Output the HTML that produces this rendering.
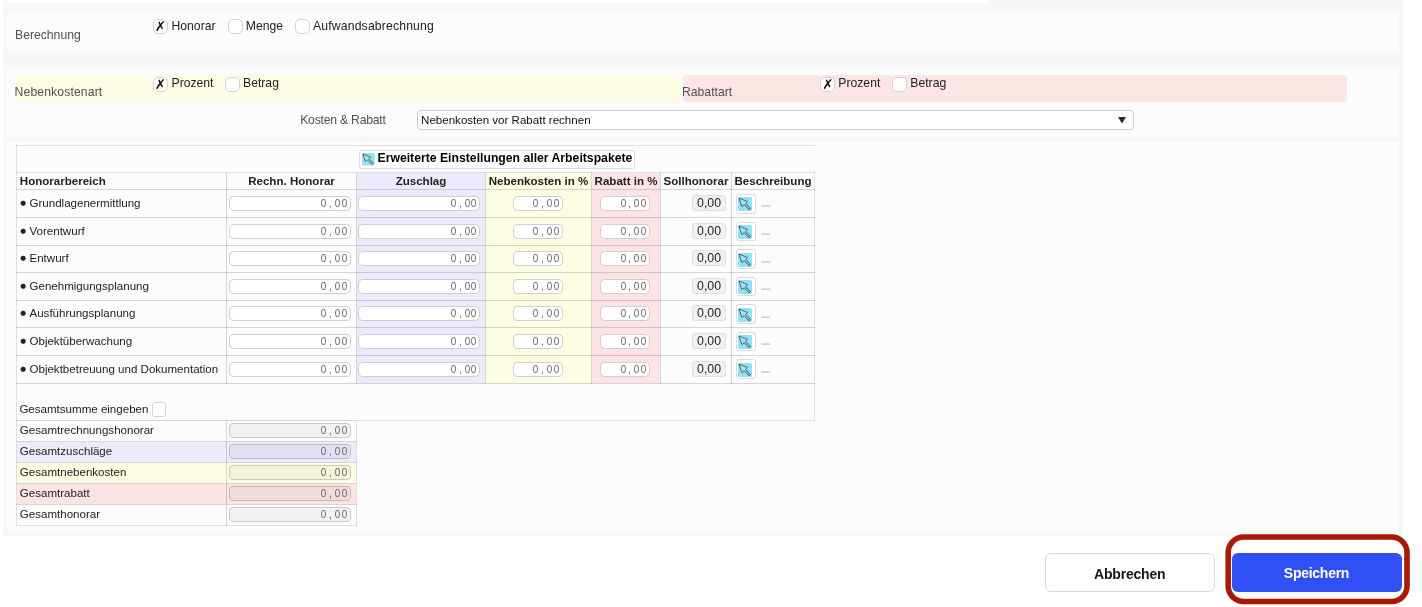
<!DOCTYPE html>
<html lang="de"><head><meta charset="utf-8"><title>Honorar</title>
<style>
html,body{margin:0;padding:0;background:#fff;}
body{width:1422px;height:607px;position:relative;overflow:hidden;font-family:"Liberation Sans",sans-serif;color:#222;}
.abs{position:absolute;}
#outer{left:3px;top:0;width:1400px;height:535.5px;background:#f7f7f7;}
#topw{left:7px;top:0;width:980.5px;height:3px;background:#fff;border-bottom-left-radius:3px;}
.lp{left:7px;width:1392px;background:#fcfcfc;}
.lbl{font-size:12.2px;color:#505050;white-space:nowrap;line-height:14px;letter-spacing:0;}
.opt{font-size:12.2px;color:#222;white-space:nowrap;line-height:14px;letter-spacing:0;}
.cb{width:13px;height:13px;border:1px solid #d4d4d4;border-radius:5px;background:#fff;box-sizing:content-box;}
.cb span{position:absolute;left:-1px;top:-1.6px;width:15px;text-align:center;font-size:13.5px;line-height:15px;font-family:"DejaVu Sans",sans-serif;color:#111;}
.t{font-size:11.56px;white-space:nowrap;line-height:14px;color:#222;}
.b{font-weight:bold;}
.hl{background:rgba(0,0,0,0.15);height:1px;}
.vl{background:rgba(0,0,0,0.15);width:1px;}
.lt{background:rgba(0,0,0,0.11);}
.inp{box-sizing:border-box;border:1px solid #cfcfcf;border-radius:4.5px;background:#fff;height:14.6px;}
.inp span{position:absolute;right:2.2px;top:-0.4px;font-family:"Liberation Sans",sans-serif;font-size:11px;line-height:13px;color:#666;white-space:nowrap;}
.inp i{display:inline-block;width:6.95px;text-align:center;font-style:normal;transform:scaleX(0.9);}
.tin{background:rgba(0,0,0,0.04);border-color:rgba(0,0,0,0.17);}
.soll{box-sizing:border-box;border:1px solid #e0e0e0;border-radius:3px;background:#f1f1f1;width:33.5px;height:15.6px;}
.soll span{position:absolute;left:0;width:100%;text-align:center;top:0.3px;font-size:12.3px;line-height:14px;color:#222;}
.btn{box-sizing:border-box;border:1px solid #dcdcdc;border-radius:3px;background:#fff;}
.ic{position:absolute;display:block;}
.bu{display:inline-block;width:9.9px;font-family:'DejaVu Sans',sans-serif;font-size:6.7px;line-height:14px;vertical-align:top;position:relative;top:-0.2px;left:0.7px;}
.dash{font-size:11.5px;color:#d2d2d2;line-height:14px;font-weight:bold;}
</style></head><body><div id="wrap" style="position:absolute;left:0;top:0;width:1422px;height:607px;will-change:transform;">
<div id="outer" class="abs"></div>
<div id="topw" class="abs"></div>
<div class="abs lp" style="top:12px;height:39.7px;"></div>
<div class="abs lp" style="top:68.7px;height:68.6px;"></div>
<div class="abs lp" style="top:141px;height:390.6px;"></div>

<div class="abs lbl" style="left:15px;top:27.6px;">Berechnung</div>
<div class="abs cb" style="left:153px;top:19.2px;"><span>✗</span></div>
<div class="abs opt" style="left:171.5px;top:18.8px;">Honorar</div>
<div class="abs cb" style="left:228px;top:19.2px;"></div>
<div class="abs opt" style="left:245.8px;top:18.8px;">Menge</div>
<div class="abs cb" style="left:295px;top:19.2px;"></div>
<div class="abs opt" style="left:313px;top:18.8px;letter-spacing:0.17px;">Aufwandsabrechnung</div>
<div class="abs" style="left:16px;top:75px;width:664px;height:26.8px;background:#fdfde5;border-radius:3px;"></div>
<div class="abs" style="left:683px;top:75px;width:664px;height:26.8px;background:#fce5e5;border-radius:3px;"></div>
<div class="abs lbl" style="left:14.6px;top:85.2px;letter-spacing:0.12px;">Nebenkostenart</div>
<div class="abs cb" style="left:153px;top:77.4px;"><span>✗</span></div>
<div class="abs opt" style="left:171.5px;top:76px;">Prozent</div>
<div class="abs cb" style="left:225px;top:77.4px;"></div>
<div class="abs opt" style="left:243px;top:76px;">Betrag</div>
<div class="abs lbl" style="left:682px;top:84.8px;">Rabattart</div>
<div class="abs cb" style="left:820.3px;top:77.4px;"><span>✗</span></div>
<div class="abs opt" style="left:838.3px;top:76px;">Prozent</div>
<div class="abs cb" style="left:892.3px;top:77.4px;"></div>
<div class="abs opt" style="left:910.3px;top:76px;">Betrag</div>
<div class="abs lbl" style="left:300.2px;top:112.6px;letter-spacing:-0.22px;">Kosten &amp; Rabatt</div>
<div class="abs" style="left:417.3px;top:110px;width:716.6px;height:19.8px;box-sizing:border-box;border:1px solid #cfcfcf;border-radius:4px;background:#fff;"><div class="abs t" style="left:2.8px;top:2.4px;color:#111;font-size:11.55px;">Nebenkosten vor Rabatt rechnen</div><svg class="ic" style="left:699.5px;top:6px" width="8" height="7" viewBox="0 0 8 7"><path d="M0 0H8L4 6.4Z" fill="#2a2a2a"/></svg></div>
<div class="abs" style="left:357px;top:173px;width:128px;height:210px;background:#ebebfd;"></div>
<div class="abs" style="left:486px;top:173px;width:105px;height:210px;background:#fdfde3;"></div>
<div class="abs" style="left:592px;top:173px;width:68px;height:210px;background:#fce4e4;"></div>
<div class="abs" style="left:17px;top:442.3px;width:339px;height:20.099999999999966px;background:#ebebfd;"></div>
<div class="abs" style="left:17px;top:463.4px;width:339px;height:20.0px;background:#fdfde3;"></div>
<div class="abs" style="left:17px;top:484.4px;width:339px;height:20.0px;background:#fce4e4;"></div>
<div class="abs hl lt" style="left:16px;top:145px;width:799px;"></div>
<div class="abs hl lt" style="left:16px;top:172px;width:799px;"></div>
<div class="abs hl" style="left:16px;top:189px;width:799px;"></div>
<div class="abs hl" style="left:16px;top:217px;width:799px;"></div>
<div class="abs hl" style="left:16px;top:245px;width:799px;"></div>
<div class="abs hl" style="left:16px;top:272px;width:799px;"></div>
<div class="abs hl" style="left:16px;top:300px;width:799px;"></div>
<div class="abs hl" style="left:16px;top:327px;width:799px;"></div>
<div class="abs hl" style="left:16px;top:355px;width:799px;"></div>
<div class="abs hl" style="left:16px;top:383px;width:799px;"></div>
<div class="abs hl" style="left:16px;top:420px;width:341px;"></div>
<div class="abs hl lt" style="left:357px;top:420px;width:458px;"></div>
<div class="abs hl" style="left:16px;top:441px;width:341px;"></div>
<div class="abs hl" style="left:16px;top:462px;width:341px;"></div>
<div class="abs hl" style="left:16px;top:483px;width:341px;"></div>
<div class="abs hl" style="left:16px;top:504px;width:341px;"></div>
<div class="abs hl lt" style="left:16px;top:525px;width:341px;"></div>
<div class="abs vl lt" style="left:16px;top:145px;height:381px;"></div>
<div class="abs vl lt" style="left:814px;top:172px;height:248px;"></div>
<div class="abs vl" style="left:226px;top:172px;height:212px;"></div>
<div class="abs vl" style="left:356px;top:172px;height:212px;"></div>
<div class="abs vl" style="left:485px;top:172px;height:212px;"></div>
<div class="abs vl" style="left:591px;top:172px;height:212px;"></div>
<div class="abs vl" style="left:660px;top:172px;height:212px;"></div>
<div class="abs vl" style="left:731px;top:172px;height:212px;"></div>
<div class="abs vl" style="left:226px;top:420px;height:106px;"></div>
<div class="abs vl lt" style="left:356px;top:421px;height:105px;"></div>
<div class="abs btn" style="left:359.2px;top:150px;width:275.5px;height:18.8px;"><svg class="ic" style="left:2px;top:2.3px" viewBox="0 0 12 12" width="12.6" height="12.6"><rect width="12" height="12" rx="1.5" fill="#93e1f7"/><path d="M0.8 0.85 L8.1 3.8 L6.65 5.45 L10.85 9.9 L9.35 10.95 L5.35 6.7 L3.3 8.2 Z" fill="#9be3f7" stroke="#41565f" stroke-width="0.75" stroke-linejoin="round"/><path d="M6 6.1 L10.1 10.4" stroke="#41565f" stroke-width="0.4" fill="none"/></svg><div class="abs t b" style="left:17.3px;top:-0.1px;font-size:12.22px;color:#000;">Erweiterte Einstellungen aller Arbeitspakete</div></div>
<div class="abs t b" style="left:19.8px;top:174.3px;">Honorarbereich</div>
<div class="abs t b" style="left:226px;width:131px;top:174.3px;text-align:center;">Rechn. Honorar</div>
<div class="abs t b" style="left:356px;width:130px;top:174.3px;text-align:center;">Zuschlag</div>
<div class="abs t b" style="left:485px;width:107px;top:174.3px;text-align:center;">Nebenkosten in %</div>
<div class="abs t b" style="left:591px;width:70px;top:174.3px;text-align:center;">Rabatt in %</div>
<div class="abs t b" style="left:660px;width:72px;top:174.3px;text-align:center;">Sollhonorar</div>
<div class="abs t b" style="left:731px;width:84px;top:174.3px;text-align:center;">Beschreibung</div>
<div class="abs t" style="left:19.6px;top:196.2px;"><span class="bu">●</span>Grundlagenermittlung</div>
<div class="abs inp " style="left:229.3px;top:196.2px;width:121.8px;"><span style="right:2.4px"><i>0</i><i>,</i><i>0</i><i>0</i></span></div>
<div class="abs inp " style="left:358.4px;top:196.2px;width:121.2px;"><span style="right:1.2px"><i>0</i><i>,</i><i>0</i><i>0</i></span></div>
<div class="abs inp " style="left:513px;top:196.2px;width:50px;"><span style="right:1.9px"><i>0</i><i>,</i><i>0</i><i>0</i></span></div>
<div class="abs inp " style="left:600.4px;top:196.2px;width:49.3px;"><span style="right:1.4px"><i>0</i><i>,</i><i>0</i><i>0</i></span></div>
<div class="abs soll" style="left:692.3px;top:195px;"><span>0,00</span></div>
<div class="abs btn" style="left:736.2px;top:194.2px;width:19.6px;height:19.6px;"></div>
<svg class="ic" style="left:738px;top:197px" viewBox="0 0 12 12" width="14" height="14"><rect width="12" height="12" rx="1.5" fill="#93e1f7"/><path d="M0.8 0.85 L8.1 3.8 L6.65 5.45 L10.85 9.9 L9.35 10.95 L5.35 6.7 L3.3 8.2 Z" fill="#9be3f7" stroke="#41565f" stroke-width="0.75" stroke-linejoin="round"/><path d="M6 6.1 L10.1 10.4" stroke="#41565f" stroke-width="0.4" fill="none"/></svg>
<div class="abs dash" style="left:761px;top:198.6px;transform:scale(1.5,1.5);transform-origin:left 60%;">–</div>
<div class="abs t" style="left:19.6px;top:224.2px;"><span class="bu">●</span>Vorentwurf</div>
<div class="abs inp " style="left:229.3px;top:224.2px;width:121.8px;"><span style="right:2.4px"><i>0</i><i>,</i><i>0</i><i>0</i></span></div>
<div class="abs inp " style="left:358.4px;top:224.2px;width:121.2px;"><span style="right:1.2px"><i>0</i><i>,</i><i>0</i><i>0</i></span></div>
<div class="abs inp " style="left:513px;top:224.2px;width:50px;"><span style="right:1.9px"><i>0</i><i>,</i><i>0</i><i>0</i></span></div>
<div class="abs inp " style="left:600.4px;top:224.2px;width:49.3px;"><span style="right:1.4px"><i>0</i><i>,</i><i>0</i><i>0</i></span></div>
<div class="abs soll" style="left:692.3px;top:223px;"><span>0,00</span></div>
<div class="abs btn" style="left:736.2px;top:221.7px;width:19.6px;height:19.6px;"></div>
<svg class="ic" style="left:738px;top:225px" viewBox="0 0 12 12" width="14" height="14"><rect width="12" height="12" rx="1.5" fill="#93e1f7"/><path d="M0.8 0.85 L8.1 3.8 L6.65 5.45 L10.85 9.9 L9.35 10.95 L5.35 6.7 L3.3 8.2 Z" fill="#9be3f7" stroke="#41565f" stroke-width="0.75" stroke-linejoin="round"/><path d="M6 6.1 L10.1 10.4" stroke="#41565f" stroke-width="0.4" fill="none"/></svg>
<div class="abs dash" style="left:761px;top:226.6px;transform:scale(1.5,1.5);transform-origin:left 60%;">–</div>
<div class="abs t" style="left:19.6px;top:251.2px;"><span class="bu">●</span>Entwurf</div>
<div class="abs inp " style="left:229.3px;top:251.2px;width:121.8px;"><span style="right:2.4px"><i>0</i><i>,</i><i>0</i><i>0</i></span></div>
<div class="abs inp " style="left:358.4px;top:251.2px;width:121.2px;"><span style="right:1.2px"><i>0</i><i>,</i><i>0</i><i>0</i></span></div>
<div class="abs inp " style="left:513px;top:251.2px;width:50px;"><span style="right:1.9px"><i>0</i><i>,</i><i>0</i><i>0</i></span></div>
<div class="abs inp " style="left:600.4px;top:251.2px;width:49.3px;"><span style="right:1.4px"><i>0</i><i>,</i><i>0</i><i>0</i></span></div>
<div class="abs soll" style="left:692.3px;top:250px;"><span>0,00</span></div>
<div class="abs btn" style="left:736.2px;top:249.2px;width:19.6px;height:19.6px;"></div>
<svg class="ic" style="left:738px;top:253px" viewBox="0 0 12 12" width="14" height="14"><rect width="12" height="12" rx="1.5" fill="#93e1f7"/><path d="M0.8 0.85 L8.1 3.8 L6.65 5.45 L10.85 9.9 L9.35 10.95 L5.35 6.7 L3.3 8.2 Z" fill="#9be3f7" stroke="#41565f" stroke-width="0.75" stroke-linejoin="round"/><path d="M6 6.1 L10.1 10.4" stroke="#41565f" stroke-width="0.4" fill="none"/></svg>
<div class="abs dash" style="left:761px;top:254.6px;transform:scale(1.5,1.5);transform-origin:left 60%;">–</div>
<div class="abs t" style="left:19.6px;top:279.2px;"><span class="bu">●</span>Genehmigungsplanung</div>
<div class="abs inp " style="left:229.3px;top:279.2px;width:121.8px;"><span style="right:2.4px"><i>0</i><i>,</i><i>0</i><i>0</i></span></div>
<div class="abs inp " style="left:358.4px;top:279.2px;width:121.2px;"><span style="right:1.2px"><i>0</i><i>,</i><i>0</i><i>0</i></span></div>
<div class="abs inp " style="left:513px;top:279.2px;width:50px;"><span style="right:1.9px"><i>0</i><i>,</i><i>0</i><i>0</i></span></div>
<div class="abs inp " style="left:600.4px;top:279.2px;width:49.3px;"><span style="right:1.4px"><i>0</i><i>,</i><i>0</i><i>0</i></span></div>
<div class="abs soll" style="left:692.3px;top:278px;"><span>0,00</span></div>
<div class="abs btn" style="left:736.2px;top:276.7px;width:19.6px;height:19.6px;"></div>
<svg class="ic" style="left:738px;top:280px" viewBox="0 0 12 12" width="14" height="14"><rect width="12" height="12" rx="1.5" fill="#93e1f7"/><path d="M0.8 0.85 L8.1 3.8 L6.65 5.45 L10.85 9.9 L9.35 10.95 L5.35 6.7 L3.3 8.2 Z" fill="#9be3f7" stroke="#41565f" stroke-width="0.75" stroke-linejoin="round"/><path d="M6 6.1 L10.1 10.4" stroke="#41565f" stroke-width="0.4" fill="none"/></svg>
<div class="abs dash" style="left:761px;top:281.6px;transform:scale(1.5,1.5);transform-origin:left 60%;">–</div>
<div class="abs t" style="left:19.6px;top:306.2px;"><span class="bu">●</span>Ausführungsplanung</div>
<div class="abs inp " style="left:229.3px;top:306.2px;width:121.8px;"><span style="right:2.4px"><i>0</i><i>,</i><i>0</i><i>0</i></span></div>
<div class="abs inp " style="left:358.4px;top:306.2px;width:121.2px;"><span style="right:1.2px"><i>0</i><i>,</i><i>0</i><i>0</i></span></div>
<div class="abs inp " style="left:513px;top:306.2px;width:50px;"><span style="right:1.9px"><i>0</i><i>,</i><i>0</i><i>0</i></span></div>
<div class="abs inp " style="left:600.4px;top:306.2px;width:49.3px;"><span style="right:1.4px"><i>0</i><i>,</i><i>0</i><i>0</i></span></div>
<div class="abs soll" style="left:692.3px;top:305px;"><span>0,00</span></div>
<div class="abs btn" style="left:736.2px;top:304.2px;width:19.6px;height:19.6px;"></div>
<svg class="ic" style="left:738px;top:308px" viewBox="0 0 12 12" width="14" height="14"><rect width="12" height="12" rx="1.5" fill="#93e1f7"/><path d="M0.8 0.85 L8.1 3.8 L6.65 5.45 L10.85 9.9 L9.35 10.95 L5.35 6.7 L3.3 8.2 Z" fill="#9be3f7" stroke="#41565f" stroke-width="0.75" stroke-linejoin="round"/><path d="M6 6.1 L10.1 10.4" stroke="#41565f" stroke-width="0.4" fill="none"/></svg>
<div class="abs dash" style="left:761px;top:309.6px;transform:scale(1.5,1.5);transform-origin:left 60%;">–</div>
<div class="abs t" style="left:19.6px;top:334.2px;"><span class="bu">●</span>Objektüberwachung</div>
<div class="abs inp " style="left:229.3px;top:334.2px;width:121.8px;"><span style="right:2.4px"><i>0</i><i>,</i><i>0</i><i>0</i></span></div>
<div class="abs inp " style="left:358.4px;top:334.2px;width:121.2px;"><span style="right:1.2px"><i>0</i><i>,</i><i>0</i><i>0</i></span></div>
<div class="abs inp " style="left:513px;top:334.2px;width:50px;"><span style="right:1.9px"><i>0</i><i>,</i><i>0</i><i>0</i></span></div>
<div class="abs inp " style="left:600.4px;top:334.2px;width:49.3px;"><span style="right:1.4px"><i>0</i><i>,</i><i>0</i><i>0</i></span></div>
<div class="abs soll" style="left:692.3px;top:333px;"><span>0,00</span></div>
<div class="abs btn" style="left:736.2px;top:331.7px;width:19.6px;height:19.6px;"></div>
<svg class="ic" style="left:738px;top:335px" viewBox="0 0 12 12" width="14" height="14"><rect width="12" height="12" rx="1.5" fill="#93e1f7"/><path d="M0.8 0.85 L8.1 3.8 L6.65 5.45 L10.85 9.9 L9.35 10.95 L5.35 6.7 L3.3 8.2 Z" fill="#9be3f7" stroke="#41565f" stroke-width="0.75" stroke-linejoin="round"/><path d="M6 6.1 L10.1 10.4" stroke="#41565f" stroke-width="0.4" fill="none"/></svg>
<div class="abs dash" style="left:761px;top:336.6px;transform:scale(1.5,1.5);transform-origin:left 60%;">–</div>
<div class="abs t" style="left:19.6px;top:362.2px;"><span class="bu">●</span>Objektbetreuung und Dokumentation</div>
<div class="abs inp " style="left:229.3px;top:362.2px;width:121.8px;"><span style="right:2.4px"><i>0</i><i>,</i><i>0</i><i>0</i></span></div>
<div class="abs inp " style="left:358.4px;top:362.2px;width:121.2px;"><span style="right:1.2px"><i>0</i><i>,</i><i>0</i><i>0</i></span></div>
<div class="abs inp " style="left:513px;top:362.2px;width:50px;"><span style="right:1.9px"><i>0</i><i>,</i><i>0</i><i>0</i></span></div>
<div class="abs inp " style="left:600.4px;top:362.2px;width:49.3px;"><span style="right:1.4px"><i>0</i><i>,</i><i>0</i><i>0</i></span></div>
<div class="abs soll" style="left:692.3px;top:361px;"><span>0,00</span></div>
<div class="abs btn" style="left:736.2px;top:359.2px;width:19.6px;height:19.6px;"></div>
<svg class="ic" style="left:738px;top:363px" viewBox="0 0 12 12" width="14" height="14"><rect width="12" height="12" rx="1.5" fill="#93e1f7"/><path d="M0.8 0.85 L8.1 3.8 L6.65 5.45 L10.85 9.9 L9.35 10.95 L5.35 6.7 L3.3 8.2 Z" fill="#9be3f7" stroke="#41565f" stroke-width="0.75" stroke-linejoin="round"/><path d="M6 6.1 L10.1 10.4" stroke="#41565f" stroke-width="0.4" fill="none"/></svg>
<div class="abs dash" style="left:761px;top:364.6px;transform:scale(1.5,1.5);transform-origin:left 60%;">–</div>
<div class="abs t" style="left:19.4px;top:401.8px;">Gesamtsumme eingeben</div>
<div class="abs cb" style="left:152.3px;top:401.8px;border-radius:3px;width:12px;height:12.8px;"></div>
<div class="abs t" style="left:19.8px;top:423px;">Gesamtrechnungshonorar</div>
<div class="abs inp tin" style="left:229.3px;top:423.3px;width:121.8px;"><span style="right:2.4px"><i>0</i><i>,</i><i>0</i><i>0</i></span></div>
<div class="abs t" style="left:19.8px;top:444px;">Gesamtzuschläge</div>
<div class="abs inp tin" style="left:229.3px;top:444.3px;width:121.8px;"><span style="right:2.4px"><i>0</i><i>,</i><i>0</i><i>0</i></span></div>
<div class="abs t" style="left:19.8px;top:465px;">Gesamtnebenkosten</div>
<div class="abs inp tin" style="left:229.3px;top:465.3px;width:121.8px;"><span style="right:2.4px"><i>0</i><i>,</i><i>0</i><i>0</i></span></div>
<div class="abs t" style="left:19.8px;top:486px;">Gesamtrabatt</div>
<div class="abs inp tin" style="left:229.3px;top:486.3px;width:121.8px;"><span style="right:2.4px"><i>0</i><i>,</i><i>0</i><i>0</i></span></div>
<div class="abs t" style="left:19.8px;top:507px;">Gesamthonorar</div>
<div class="abs inp tin" style="left:229.3px;top:507.3px;width:121.8px;"><span style="right:2.4px"><i>0</i><i>,</i><i>0</i><i>0</i></span></div>
<div class="abs" style="left:1045px;top:553px;width:169.5px;height:38.8px;box-sizing:border-box;border:1px solid #d5d9e6;border-radius:6px;background:#fff;"><div class="abs" style="left:0;width:100%;text-align:center;top:11.7px;font-size:14px;line-height:16px;font-weight:bold;color:#14161f;letter-spacing:-0.2px;">Abbrechen</div></div>
<div class="abs" style="left:1232px;top:552.8px;width:170px;height:39.2px;border-radius:6px;background:#3050f5;"><div class="abs" style="left:0;width:100%;text-align:center;top:12.4px;left:-0.5px;font-size:14px;line-height:16px;font-weight:bold;color:#fff;letter-spacing:-0.27px;">Speichern</div></div>
<svg class="abs" style="left:1220px;top:530px;" width="200" height="77" viewBox="0 0 200 77"><rect x="8.2" y="7" width="178.8" height="64.5" rx="15.5" ry="15.5" fill="none" stroke="#a81a08" stroke-width="5.6"/></svg>
</div></body></html>
